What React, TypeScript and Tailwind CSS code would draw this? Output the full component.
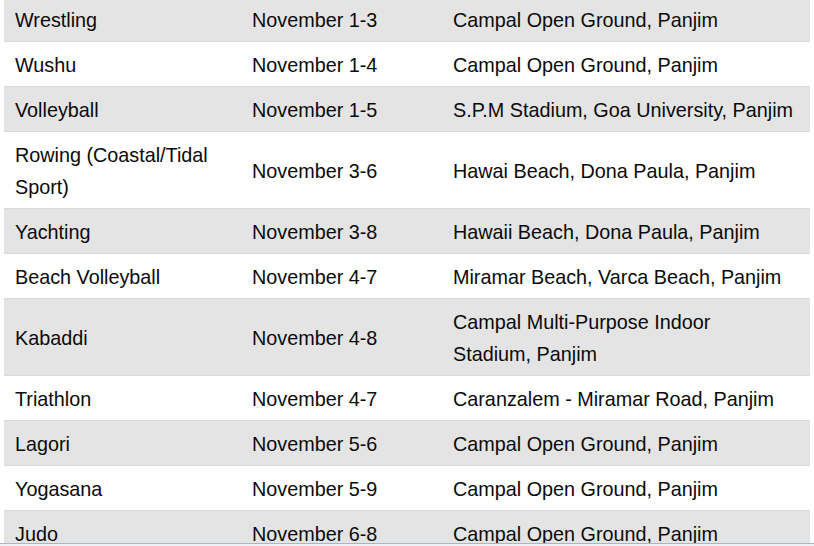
const EVENTS: [string, string, string][] = [
  ['Wrestling', 'November 1-3', 'Campal Open Ground, Panjim'],
  ['Wushu', 'November 1-4', 'Campal Open Ground, Panjim'],
  ['Volleyball', 'November 1-5', 'S.P.M Stadium, Goa University, Panjim'],
  ['Rowing (Coastal/Tidal Sport)', 'November 3-6', 'Hawai Beach, Dona Paula, Panjim'],
  ['Yachting', 'November 3-8', 'Hawaii Beach, Dona Paula, Panjim'],
  ['Beach Volleyball', 'November 4-7', 'Miramar Beach, Varca Beach, Panjim'],
  ['Kabaddi', 'November 4-8', 'Campal Multi-Purpose Indoor\nStadium, Panjim'],
  ['Triathlon', 'November 4-7', 'Caranzalem - Miramar Road, Panjim'],
  ['Lagori', 'November 5-6', 'Campal Open Ground, Panjim'],
  ['Yogasana', 'November 5-9', 'Campal Open Ground, Panjim'],
  ['Judo', 'November 6-8', 'Campal Open Ground, Panjim'],
];

export default function App() {
  return (
    <div className="relative h-[546px] w-[814px] overflow-hidden bg-white font-['Liberation_Sans',Arial,sans-serif] text-[19.8px] text-[#0a0a0a]">
      <table className="-mt-[3px] ml-[4px] w-[806px] table-fixed border-collapse">
        <colgroup>
          <col className="w-[237px]" />
          <col className="w-[201px]" />
          <col />
        </colgroup>
        <tbody>
          {EVENTS.map(([sport, dates, venue], i) => (
            <tr
              key={sport}
              className={i % 2 === 0 ? 'bg-[#e4e4e4]' : 'bg-white'}
            >
              <td className="border-b border-[#d8d8d8] px-[11px] pt-[7px] pb-[5px] align-middle leading-[32px]">{sport}</td>
              <td className="border-b border-[#d8d8d8] px-[11px] pt-[7px] pb-[5px] align-middle leading-[32px]">{dates}</td>
              <td className="whitespace-pre-line border-b border-[#d8d8d8] px-[11px] pt-[7px] pb-[5px] align-middle leading-[32px]">{venue}</td>
            </tr>
          ))}
        </tbody>
      </table>
      <div className="absolute inset-x-0 bottom-0 h-[3px] border-t border-[#a9b6ca] bg-[#eef2f8]" />
    </div>
  );
}
